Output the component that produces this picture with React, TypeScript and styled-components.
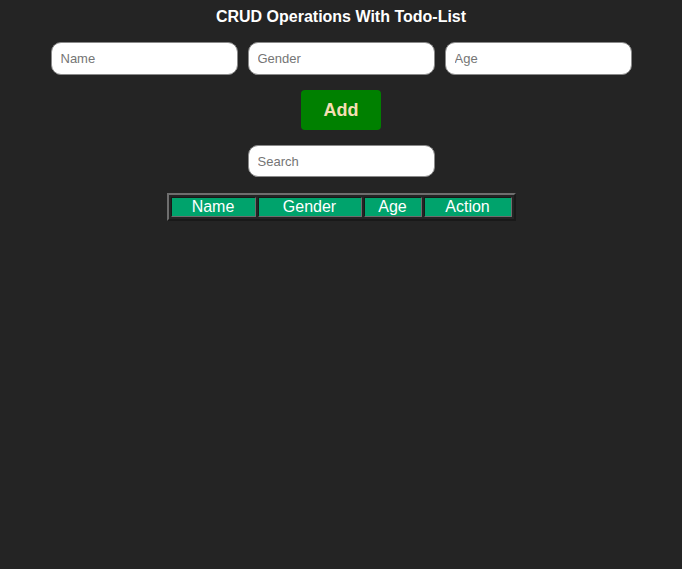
import React, { useState } from "react";
import styled, { createGlobalStyle } from "styled-components";

const Global = createGlobalStyle`
  html, body { margin: 0; padding: 0; background: #242424; }
  body { font-family: "Liberation Sans", Arial, sans-serif; min-height: 569px; }
`;

const Page = styled.div`
  display: flex;
  flex-direction: column;
  align-items: center;
  padding-top: 8px;
`;

const Title = styled.h1`
  margin: 0;
  font-size: 16px;
  line-height: 18px;
  font-weight: 700;
  color: #ffffff;
`;

const InputRow = styled.div`
  display: flex;
  gap: 10px;
  margin-top: 16px;
`;

const Field = styled.input<{ $h?: number }>`
  display: block;
  box-sizing: border-box;
  width: 187px;
  height: ${(p) => p.$h ?? 33}px;
  padding: 0 9px;
  border: 1px solid #8a8a8a;
  border-radius: 10px;
  background: #ffffff;
  font-family: "Liberation Sans", Arial, sans-serif;
  font-size: 13px;
  color: #222;
  outline: none;
  &::placeholder { color: #757575; }
`;

const AddButton = styled.button`
  margin-top: 15px;
  width: 80px;
  height: 40px;
  border: none;
  border-radius: 4px;
  background: #008000;
  color: #f5deb3;
  font-family: "Liberation Sans", Arial, sans-serif;
  font-size: 18px;
  font-weight: 700;
  cursor: pointer;
`;

const SearchWrap = styled.div`
  display: flex;
  margin-top: 15px;
`;

const Table = styled.table`
  margin-top: 16px;
  border: 2px outset #6e6e6e;
  border-spacing: 2px;
`;

const Th = styled.th<{ $w: number }>`
  box-sizing: border-box;
  width: ${(p) => p.$w}px;
  height: 20px;
  padding: 0;
  border: 1px inset #6e6e6e;
  background: #00a36c;
  color: #ffffff;
  font-family: "Liberation Sans", Arial, sans-serif;
  font-size: 16px;
  font-weight: 400;
  line-height: 18px;
  text-align: center;
`;

export default function App() {
  const [name, setName] = useState("");
  const [gender, setGender] = useState("");
  const [age, setAge] = useState("");
  const [search, setSearch] = useState("");
  return (
    <>
      <Global />
      <Page>
        <Title>CRUD Operations With Todo-List</Title>
        <InputRow>
          <Field placeholder="Name" value={name} onChange={(e) => setName(e.target.value)} />
          <Field placeholder="Gender" value={gender} onChange={(e) => setGender(e.target.value)} />
          <Field placeholder="Age" value={age} onChange={(e) => setAge(e.target.value)} />
        </InputRow>
        <AddButton>Add</AddButton>
        <SearchWrap>
          <Field $h={32} placeholder="Search" value={search} onChange={(e) => setSearch(e.target.value)} />
        </SearchWrap>
        <Table>
          <thead>
            <tr>
              <Th $w={85}>Name</Th>
              <Th $w={104}>Gender</Th>
              <Th $w={58}>Age</Th>
              <Th $w={88}>Action</Th>
            </tr>
          </thead>
          <tbody />
        </Table>
      </Page>
    </>
  );
}
